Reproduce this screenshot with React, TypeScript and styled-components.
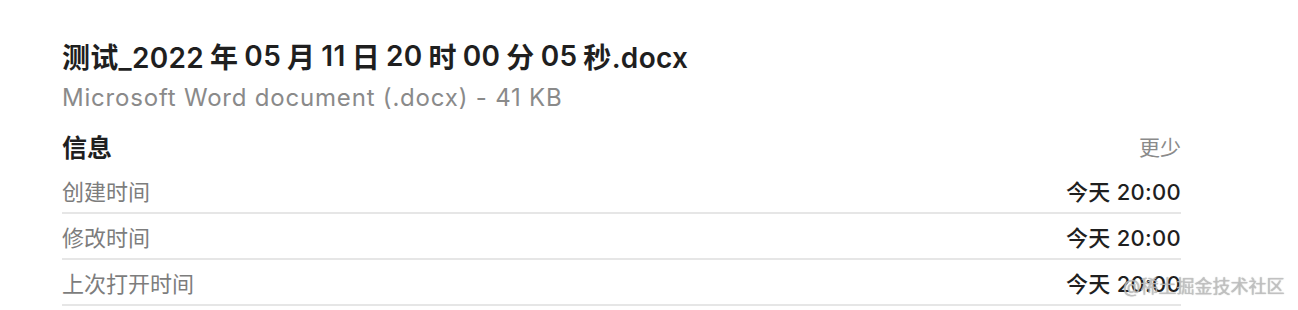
import styled, { createGlobalStyle } from "styled-components";
import React from "react";

const GlobalStyle = createGlobalStyle`
  html, body {
    margin: 0;
    padding: 0;
    background: #ffffff;
  }
  body {
    font-family: Inter, "Noto Sans CJK SC", sans-serif;
  }
`;

// 중국어 글자와 숫자 사이 간격 (macOS 자동 간격 흉내)
const titleParts: { text: string; han?: boolean }[] = [
  { text: "测试_2022" },
  { text: "年", han: true },
  { text: "05" },
  { text: "月", han: true },
  { text: "11" },
  { text: "日", han: true },
  { text: "20" },
  { text: "时", han: true },
  { text: "00" },
  { text: "分", han: true },
  { text: "05" },
  { text: "秒.docx" },
];

const rows = [
  { label: "创建时间", value: "今天 20:00" },
  { label: "修改时间", value: "今天 20:00" },
  { label: "上次打开时间", value: "今天 20:00" },
];

const App = () => {
  return (
    <Page>
      <GlobalStyle />
      <Panel>
        <Title>
          {titleParts.map((part, index) =>
            part.han ? <Han key={index}>{part.text}</Han> : <span key={index}>{part.text}</span>
          )}
        </Title>
        <Subtitle>Microsoft Word document (.docx) - 41 KB</Subtitle>
        <SectionHead>
          <SectionTitle>信息</SectionTitle>
          <Toggle>更少</Toggle>
        </SectionHead>
        {rows.map((row) => (
          <Row key={row.label}>
            <Label>{row.label}</Label>
            <Value>{row.value}</Value>
          </Row>
        ))}
      </Panel>
      <Watermark>@稀土掘金技术社区</Watermark>
    </Page>
  );
};

export default App;

const Page = styled.div`
  position: relative;
  width: 1298px;
  height: 310px;
  overflow: hidden;
  background: #ffffff;
`;

const Panel = styled.div`
  display: flex;
  flex-direction: column;
  width: 1119px;
  padding: 39px 0 0 62px;
`;

const Title = styled.div`
  display: flex;
  align-items: center;
  height: 34px;
  font-size: 28px;
  font-weight: 600;
  letter-spacing: 0.3px;
  color: #1f1f1f;
  white-space: nowrap;
  & > span:last-child {
    margin-left: 6px;
  }
`;

const Han = styled.span`
  margin: 0 6px;
`;

const Subtitle = styled.div`
  margin-top: 11px;
  font-size: 24px;
  line-height: 28px;
  letter-spacing: 0.8px;
  color: #8a8a8a;
`;

const SectionHead = styled.div`
  display: flex;
  justify-content: space-between;
  align-items: center;
  height: 44px;
  margin-top: 12px;
`;

const SectionTitle = styled.div`
  font-size: 25px;
  font-weight: 700;
  color: #1f1f1f;
`;

const Toggle = styled.div`
  font-size: 21px;
  color: #8a8a8a;
`;

const Row = styled.div`
  display: flex;
  justify-content: space-between;
  align-items: center;
  height: 44px;
  border-bottom: 2px solid #e6e6e6;
`;

const Label = styled.div`
  font-size: 22px;
  color: #7d7d7d;
`;

const Value = styled.div`
  font-size: 22px;
  font-weight: 500;
  letter-spacing: 0.3px;
  color: #1f1f1f;
`;

const Watermark = styled.div`
  position: absolute;
  left: 1123px;
  top: 274px;
  font-size: 18px;
  line-height: 26px;
  color: rgba(200, 200, 200, 0.8);
  text-shadow: 0 0 1px rgba(110, 110, 110, 0.7);
  white-space: nowrap;
`;
